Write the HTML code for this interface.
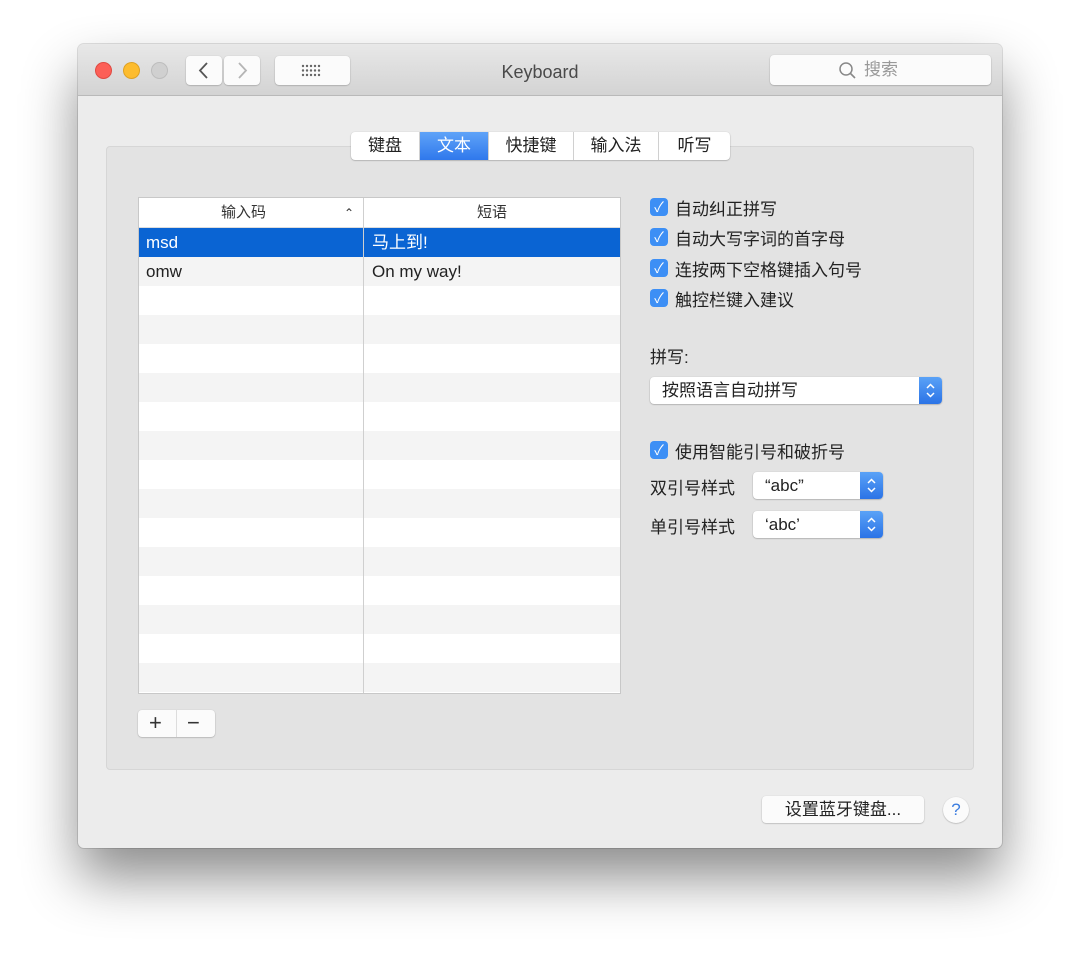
<!DOCTYPE html><html><head><meta charset="utf-8"><style>
*{box-sizing:border-box;margin:0;padding:0}
body{width:1080px;height:960px;background:#fff;position:relative;overflow:hidden;font-family:"Liberation Sans","Noto Sans CJK SC",sans-serif;color:#222}
.a{position:absolute}
.win{left:78px;top:44px;width:924px;height:804px;background:#ececec;border-radius:6px;box-shadow:0 30px 55px rgba(0,0,0,.45),0 0 0 1px rgba(0,0,0,.12)}
.tb{left:0;top:0;width:924px;height:52px;background:linear-gradient(#e8e8e8,#d3d3d3);border-bottom:1px solid #b9b9b9;border-radius:6px 6px 0 0}
.dot{width:17px;height:17px;border-radius:50%;top:18px}
.btn{background:#fbfbfb;border-radius:4px;box-shadow:0 0.5px 1.5px rgba(0,0,0,.3)}
.panel{left:28px;top:102px;width:868px;height:624px;background:#e3e3e3;border-radius:4px;border:1px solid #d6d6d6}
.tabs{left:273px;top:88px;height:28px;width:379px;background:#fff;border-radius:4px;box-shadow:0 0.5px 1.5px rgba(0,0,0,.35);display:flex;font-size:17px;line-height:28px}
.tabs div{text-align:center;border-right:1px solid #d0d0d0}
.tbl{left:60px;top:153px;width:483px;height:497px;background:#fff;border:1px solid #c8c8c8;overflow:hidden}
.row{position:absolute;left:0;width:483px;height:29px;font-size:17px;line-height:29px}
.cb{width:18px;height:18px;background:#3d8ff5;border-radius:4px;color:#fff;font-size:14px;line-height:18px;text-align:center}
.lbl{font-size:17px}
.pop{background:#fff;border-radius:4px;box-shadow:0 0.5px 1.5px rgba(0,0,0,.35);font-size:17px;line-height:27px;padding-left:12px}
.arr{position:absolute;right:0;top:0;width:23px;height:100%;background:linear-gradient(#5aa2f7,#2b73e6);border-radius:0 4px 4px 0}
</style></head><body>
<div class="a win">
 <div class="a tb">
  <div class="a dot" style="left:17px;background:#fc5f57;border:1px solid #df4a42"></div>
  <div class="a dot" style="left:45px;background:#fdbc2e;border:1px solid #dea123"></div>
  <div class="a dot" style="left:73px;background:#d0d0d0;border:1px solid #bdbdbd"></div>
  <div class="a btn" style="left:108px;top:12px;width:36px;height:29px"><svg width="36" height="29"><path d="M21 7L14 14.5L21 22" fill="none" stroke="#555" stroke-width="1.8"/></svg></div>
  <div class="a btn" style="left:146px;top:12px;width:36px;height:29px"><svg width="36" height="29"><path d="M15 7L22 14.5L15 22" fill="none" stroke="#b5b5b5" stroke-width="1.8"/></svg></div>
  <div class="a btn" style="left:197px;top:12px;width:75px;height:29px">
   <svg width="75" height="29"><g fill="#666"><circle cx="28" cy="10" r="1.2"/><circle cx="32" cy="10" r="1.2"/><circle cx="36" cy="10" r="1.2"/><circle cx="40" cy="10" r="1.2"/><circle cx="44" cy="10" r="1.2"/><circle cx="28" cy="14.5" r="1.2"/><circle cx="32" cy="14.5" r="1.2"/><circle cx="36" cy="14.5" r="1.2"/><circle cx="40" cy="14.5" r="1.2"/><circle cx="44" cy="14.5" r="1.2"/><circle cx="28" cy="19" r="1.2"/><circle cx="32" cy="19" r="1.2"/><circle cx="36" cy="19" r="1.2"/><circle cx="40" cy="19" r="1.2"/><circle cx="44" cy="19" r="1.2"/></g></svg>
  </div>
  <div class="a" style="left:0;width:924px;top:18px;text-align:center;font-size:18px;color:#4a4a4a">Keyboard</div>
  <div class="a btn" style="left:692px;top:11px;width:221px;height:30px;color:#999;font-size:17px;line-height:30px">
   <svg class="a" style="left:68px;top:6px" width="20" height="20"><circle cx="8" cy="8" r="6" fill="none" stroke="#888" stroke-width="1.5"/><path d="M12.5 12.5L17 17" stroke="#888" stroke-width="1.6"/></svg>
   <span class="a" style="left:94px">搜索</span></div>
 </div>
 <div class="a panel"></div>
 <div class="a tabs"><div style="width:69px">键盘</div><div style="width:69px;background:linear-gradient(#5fa3f8,#2f78ec);color:#fff">文本</div><div style="width:85px">快捷键</div><div style="width:85px">输入法</div><div style="width:71px;border:none">听写</div></div>
 <div class="a tbl">
  <div class="row" style="top:0;height:30px;border-bottom:1px solid #ddd;font-size:15px;line-height:30px;color:#333"><span class="a" style="left:82px">输入码</span><span class="a" style="left:205px;font-size:12px">&#x2303;</span><span class="a" style="left:338px">短语</span></div>
  <div class="row" style="top:30px;background:#0a64d3;color:#fff"><span class="a" style="left:7px">msd</span><span class="a" style="left:233px">马上到!</span></div>
  <div class="row" style="top:59px;background:#f4f4f4"><span class="a" style="left:7px">omw</span><span class="a" style="left:233px">On my way!</span></div>
  <div class="row" style="top:117px;background:#f4f4f4"></div>
  <div class="row" style="top:175px;background:#f4f4f4"></div>
  <div class="row" style="top:233px;background:#f4f4f4"></div>
  <div class="row" style="top:291px;background:#f4f4f4"></div>
  <div class="row" style="top:349px;background:#f4f4f4"></div>
  <div class="row" style="top:407px;background:#f4f4f4"></div>
  <div class="row" style="top:465px;background:#f4f4f4"></div>
  <div class="a" style="left:224px;top:0;width:1px;height:497px;background:#cfcfcf"></div>
 </div>
 <div class="a btn" style="left:60px;top:666px;width:77px;height:27px;font-size:22px;line-height:26px;color:#333">
  <span class="a" style="left:11px">+</span><div class="a" style="left:38px;top:0;width:1px;height:27px;background:#ddd"></div><span class="a" style="left:49px">&#x2212;</span></div>
 <div class="a cb" style="left:572px;top:154px">&#x2713;</div><div class="a lbl" style="left:597px;top:151px">自动纠正拼写</div>
 <div class="a cb" style="left:572px;top:184px">&#x2713;</div><div class="a lbl" style="left:597px;top:181px">自动大写字词的首字母</div>
 <div class="a cb" style="left:572px;top:215px">&#x2713;</div><div class="a lbl" style="left:597px;top:212px">连按两下空格键插入句号</div>
 <div class="a cb" style="left:572px;top:245px">&#x2713;</div><div class="a lbl" style="left:597px;top:242px">触控栏键入建议</div>
 <div class="a lbl" style="left:572px;top:299px">拼写:</div>
 <div class="a pop" style="left:572px;top:333px;width:292px;height:27px">按照语言自动拼写<div class="arr"><svg width="23" height="27"><path d="M8 11L11.5 7.5L15 11M8 16L11.5 19.5L15 16" fill="none" stroke="#fff" stroke-width="1.5"/></svg></div></div>
 <div class="a cb" style="left:572px;top:397px">&#x2713;</div><div class="a lbl" style="left:597px;top:394px">使用智能引号和破折号</div>
 <div class="a lbl" style="left:572px;top:430px">双引号样式</div>
 <div class="a pop" style="left:675px;top:428px;width:130px;height:27px">“abc”<div class="arr"><svg width="23" height="27"><path d="M8 11L11.5 7.5L15 11M8 16L11.5 19.5L15 16" fill="none" stroke="#fff" stroke-width="1.5"/></svg></div></div>
 <div class="a lbl" style="left:572px;top:469px">单引号样式</div>
 <div class="a pop" style="left:675px;top:467px;width:130px;height:27px">‘abc’<div class="arr"><svg width="23" height="27"><path d="M8 11L11.5 7.5L15 11M8 16L11.5 19.5L15 16" fill="none" stroke="#fff" stroke-width="1.5"/></svg></div></div>
 <div class="a btn" style="left:684px;top:752px;width:162px;height:27px;text-align:center;font-size:17px;line-height:27px">设置蓝牙键盘...</div>
 <div class="a btn" style="left:865px;top:753px;width:26px;height:26px;border-radius:50%;text-align:center;color:#3b7de0;font-size:17px;line-height:26px">?</div>
</div>
</body></html>
